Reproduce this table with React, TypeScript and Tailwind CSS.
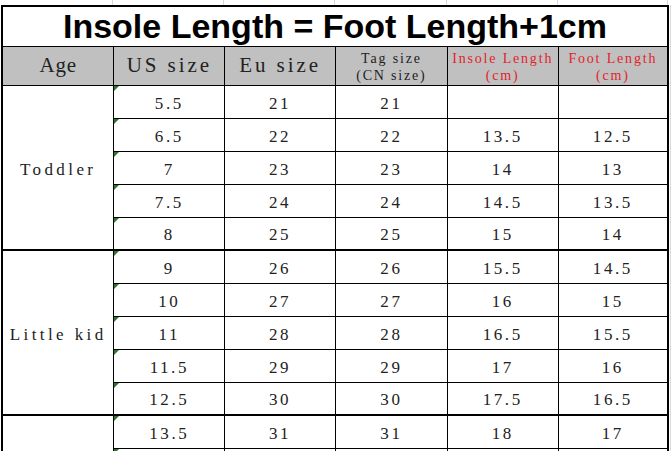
const groups: { age: string; rows: string[][] }[] = [
  {
    age: 'Toddler',
    rows: [
      ['5.5', '21', '21', '', ''],
      ['6.5', '22', '22', '13.5', '12.5'],
      ['7', '23', '23', '14', '13'],
      ['7.5', '24', '24', '14.5', '13.5'],
      ['8', '25', '25', '15', '14'],
    ],
  },
  {
    age: 'Little kid',
    rows: [
      ['9', '26', '26', '15.5', '14.5'],
      ['10', '27', '27', '16', '15'],
      ['11', '28', '28', '16.5', '15.5'],
      ['11.5', '29', '29', '17', '16'],
      ['12.5', '30', '30', '17.5', '16.5'],
    ],
  },
  {
    age: '',
    rows: [
      ['13.5', '31', '31', '18', '17'],
      ['', '', '', '', ''],
    ],
  },
];

const COLS = [112, 111, 111, 112, 111, 110];

function Marker() {
  // little green "number stored as text" flag
  return (
    <span className="absolute left-0 top-0 h-0 w-0 border-t-[5px] border-r-[5px] border-t-[#2a7a2a] border-r-transparent" />
  );
}

export default function App() {
  return (
    <div className="h-[451px] w-[671px] overflow-hidden bg-white font-['Liberation_Serif','Times_New_Roman',serif] text-[#222]">
      {/* sheet gridlines above the table */}
      <div className="flex h-[5px]">
        <div className="w-[1px]" />
        {COLS.map((w, i) => (
          <div key={i} style={{ width: w }} className="border-r border-[#dadada]" />
        ))}
      </div>

      <div className="flex">
        <div className="w-[1px]" />
        <table className="table-fixed border-collapse border-2 border-black">
          <colgroup>
            {COLS.map((w, i) => (
              <col key={i} style={{ width: w }} />
            ))}
          </colgroup>
          <tbody>
            <tr className="h-[40px]">
              <td
                colSpan={6}
                className="border border-black text-center font-['Liberation_Sans',Arial,sans-serif] text-[34px] font-bold leading-none text-black"
              >
                Insole Length = Foot Length+1cm
              </td>
            </tr>
            <tr className="h-[39px] bg-[#c0c0c0]">
              <td className="border border-black text-center text-[21px] leading-none tracking-[0.04em]">Age</td>
              <td className="border border-black text-center text-[21px] leading-none tracking-[0.14em]">US size</td>
              <td className="border border-black text-center text-[21px] leading-none tracking-[0.14em]">Eu size</td>
              <td className="border border-black pt-[3px] text-center text-[14px] leading-[17px] tracking-[0.13em]">
                Tag size
                <br />
                (CN size)
              </td>
              <td className="border border-black pt-[3px] text-center text-[14px] leading-[17px] tracking-[0.13em] text-[#e3222b]">
                Insole Length
                <br />
                (cm)
              </td>
              <td className="border border-black pt-[3px] text-center text-[14px] leading-[17px] tracking-[0.13em] text-[#e3222b]">
                Foot Length
                <br />
                (cm)
              </td>
            </tr>
            {groups.map((g) =>
              g.rows.map((r, i) => {
                const last = i === g.rows.length - 1;
                const b = last ? 'border-b-2' : '';
                return (
                  <tr key={g.age + i} className="h-[33px] text-[17px] leading-none tracking-[0.15em]">
                    {i === 0 && (
                      <td
                        rowSpan={g.rows.length}
                        className="border border-b-2 border-black pt-[4px] text-center tracking-[0.2em]"
                      >
                        {g.age}
                      </td>
                    )}
                    {r.map((v, j) => (
                      <td key={j} className={`relative border border-black pt-[3px] text-center ${b}`}>
                        {j === 0 && <Marker />}
                        {v}
                      </td>
                    ))}
                  </tr>
                );
              })
            )}
          </tbody>
        </table>
        <div className="ml-[1px] w-[1px] bg-[#dadada]" />
      </div>
    </div>
  );
}
